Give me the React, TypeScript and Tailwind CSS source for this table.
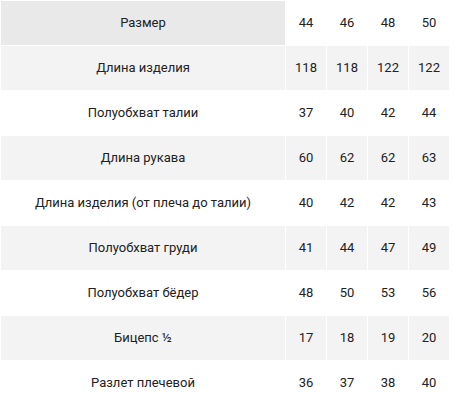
import React from "react";

const rows: [string, string[]][] = [
  ["Размер", ["44", "46", "48", "50"]],
  ["Длина изделия", ["118", "118", "122", "122"]],
  ["Полуобхват талии", ["37", "40", "42", "44"]],
  ["Длина рукава", ["60", "62", "62", "63"]],
  ["Длина изделия (от плеча до талии)", ["40", "42", "42", "43"]],
  ["Полуобхват груди", ["41", "44", "47", "49"]],
  ["Полуобхват бёдер", ["48", "50", "53", "56"]],
  ["Бицепс ½", ["17", "18", "19", "20"]],
  ["Разлет плечевой", ["36", "37", "38", "40"]],
];

export default function App() {
  return (
    <div className="w-[454px] h-[405px] bg-white overflow-hidden" style={{ fontFamily: "Roboto, 'Noto Sans', sans-serif" }}>
      <table className="w-[450px] border-separate border-spacing-[1px] text-[13px] text-[#222]">
        <tbody>
          {rows.map(([label, vals], i) => {
            const even = i % 2 === 1;
            return (
              <tr key={i} className="h-[44px]">
                <td className={`w-[284px] text-center p-0 ${i === 0 ? "bg-[#e9e9e9]" : even ? "bg-[#f3f3f3]" : "bg-white"}`}>
                  {label}
                </td>
                {vals.map((v, j) => (
                  <td key={j} className={`w-[40px] text-center p-0 ${even ? "bg-[#f3f3f3]" : "bg-white"}`}>
                    {v}
                  </td>
                ))}
              </tr>
            );
          })}
        </tbody>
      </table>
    </div>
  );
}
